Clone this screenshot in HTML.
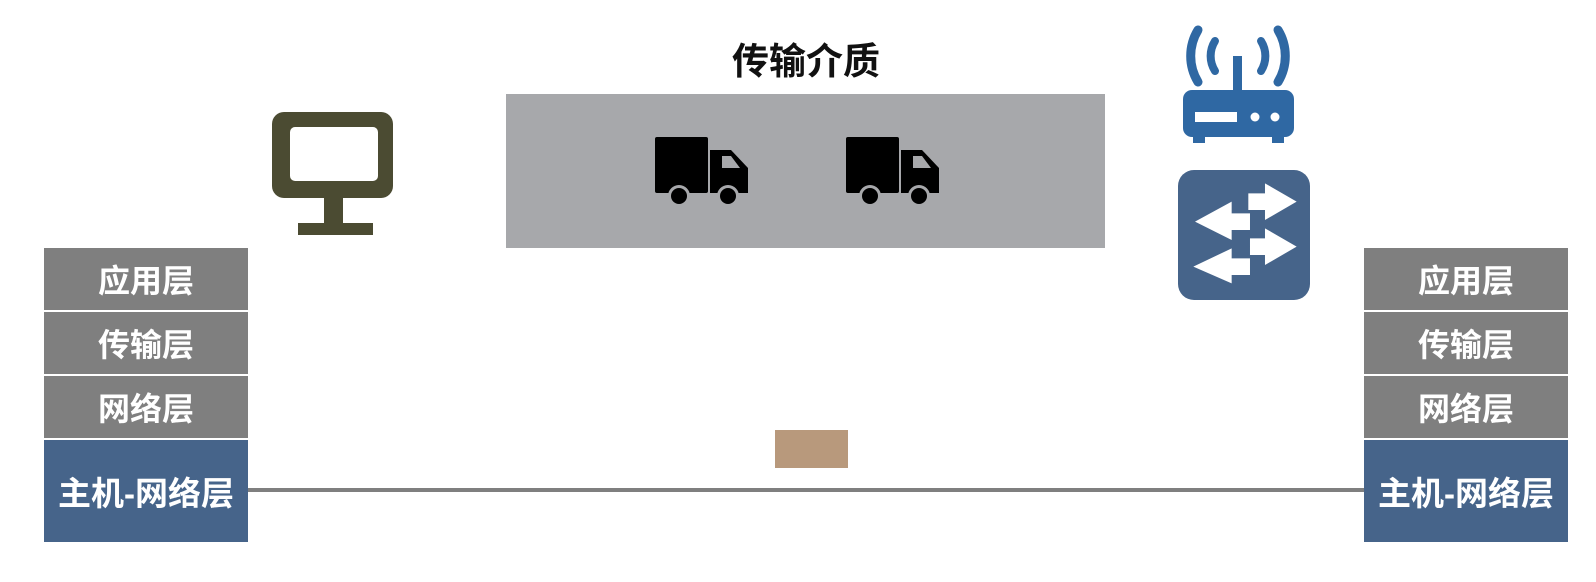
<!DOCTYPE html>
<html><head><meta charset="utf-8"><style>
html,body{margin:0;padding:0;background:#fff;}
body{width:1596px;height:582px;position:relative;overflow:hidden;font-family:"Liberation Sans","Noto Sans CJK SC",sans-serif;}
.a{position:absolute;}
.cell{position:absolute;width:204px;color:#fff;font-weight:bold;font-size:32px;display:flex;align-items:center;justify-content:center;}
.g{background:#7f7f7f;height:62px;}
.b{background:#46648a;height:102px;font-size:33px;}
</style></head><body>
<div class="a" style="left:606px;top:40px;width:400px;text-align:center;font-size:37px;font-weight:bold;color:#111;line-height:44px;">传输介质</div>
<div class="a" style="left:506px;top:94px;width:599px;height:154px;background:#a7a8ab;"></div>
<div class="a" style="left:775px;top:430px;width:73px;height:38px;background:#b8997c;"></div>
<div class="a" style="left:248px;top:488px;width:1116px;height:4px;background:#7f7f7f;"></div>

<div class="cell g" style="left:44px;top:248px;">应用层</div>
<div class="cell g" style="left:44px;top:312px;">传输层</div>
<div class="cell g" style="left:44px;top:376px;">网络层</div>
<div class="cell b" style="left:44px;top:440px;">主机-网络层</div>

<div class="cell g" style="left:1364px;top:248px;">应用层</div>
<div class="cell g" style="left:1364px;top:312px;">传输层</div>
<div class="cell g" style="left:1364px;top:376px;">网络层</div>
<div class="cell b" style="left:1364px;top:440px;">主机-网络层</div>

<svg class="a" style="left:0;top:0" width="1596" height="582" viewBox="0 0 1596 582">
 <rect x="272" y="112" width="121" height="86" rx="12" fill="#4b4b32"/>
 <rect x="290" y="127" width="88" height="54" rx="5" fill="#fff"/>
 <rect x="324" y="197" width="19" height="27" fill="#4b4b32"/>
 <rect x="298" y="223" width="75" height="12" fill="#4b4b32"/>
 <g id="t1" fill="#000">
  <rect x="655" y="137" width="53" height="56" rx="2"/>
  <path d="M710 150 H731 L748 168 V193 H710 Z"/>
  <path d="M722 156 H731 L740 168 H722 Z" fill="#a7a8ab"/>
  <circle cx="679" cy="196" r="11" fill="#a7a8ab"/>
  <circle cx="679" cy="196" r="8"/>
  <circle cx="728" cy="196" r="11" fill="#a7a8ab"/>
  <circle cx="728" cy="196" r="8"/>
 </g>
 <use href="#t1" transform="translate(191 0)"/>
 <g fill="none" stroke="#2f68a3" stroke-linecap="round">
  <path d="M1198 30 A50 50 0 0 0 1198 82" stroke-width="9"/>
  <path d="M1278 30 A50 50 0 0 1 1278 82" stroke-width="9"/>
  <path d="M1215 41 A28 28 0 0 0 1215 71" stroke-width="8"/>
  <path d="M1261 41 A28 28 0 0 1 1261 71" stroke-width="8"/>
 </g>
 <rect x="1233" y="56" width="9" height="36" fill="#2f68a3"/>
 <rect x="1183" y="90" width="111" height="47" rx="9" fill="#2f68a3"/>
 <rect x="1193" y="135" width="12" height="8" fill="#2f68a3"/>
 <rect x="1272" y="135" width="12" height="8" fill="#2f68a3"/>
 <rect x="1195" y="112" width="42" height="10" fill="#fff"/>
 <circle cx="1255" cy="117" r="4.5" fill="#fff"/>
 <circle cx="1275" cy="117" r="4.5" fill="#fff"/>
 <rect x="1178" y="170" width="132" height="130" rx="16" fill="#46648a"/>
 <g fill="#fff" transform="translate(1150 160) scale(0.3333)">
  <path d="M295 100 H345 V70 L440 125 L345 180 V150 H295 Z"/>
  <path d="M300 235 H345 V205 L440 260 L345 315 V285 H300 Z"/>
  <path d="M300 160 H245 V125 L135 185 L245 240 V210 H300 Z"/>
  <path d="M300 295 H245 V265 L130 320 L245 370 V345 H300 Z"/>
 </g>
</svg>
</body></html>
